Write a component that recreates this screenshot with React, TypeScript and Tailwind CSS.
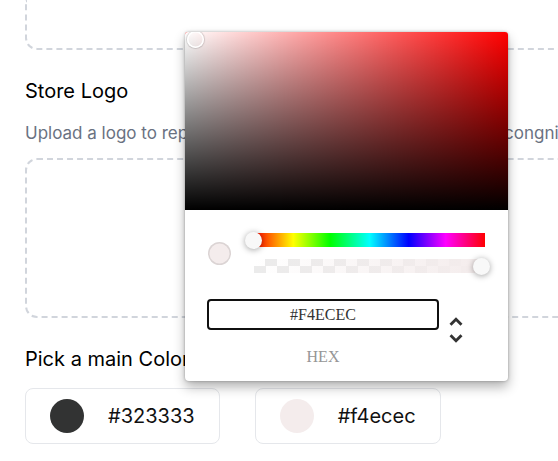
function ColorCard({ color, label }: { color: string; label: string }) {
  return (
    <div className="flex items-center gap-6 rounded-lg border border-[#e5e7eb] px-6 py-[10px]">
      <span className="h-[34px] w-[34px] rounded-full" style={{ backgroundColor: color }} />
      <span className="text-xl text-[#111]">{label}</span>
    </div>
  )
}

function ChromePicker() {
  return (
    <div className="absolute left-[185px] top-[32px] w-[323px] rounded-[4px] bg-white font-['Liberation_Serif',serif] shadow-[0_0_3px_rgba(0,0,0,0.3),0_6px_12px_rgba(0,0,0,0.3)]">
      {/* Saturation */}
      <div className="relative h-[178px] overflow-hidden rounded-t-[3px] bg-[#ff0000]">
        <div className="absolute inset-0 bg-[linear-gradient(to_right,#fff,rgba(255,255,255,0))]" />
        <div className="absolute inset-0 bg-[linear-gradient(to_top,#000,rgba(0,0,0,0))]" />
        <div className="absolute left-[2px] top-[-1px] h-[17px] w-[17px] rounded-full shadow-[inset_0_0_0_1.5px_#fff,0_0_1px_1px_rgba(0,0,0,0.15)]" />
      </div>

      <div className="px-[23px] pb-[16px] pt-[23px]">
        {/* Controls */}
        <div className="flex">
          <div className="w-[46px]">
            <div className="mt-[9px] h-[23px] w-[23px] rounded-full bg-[#f4ecec] shadow-[inset_0_0_0_1.5px_rgba(0,0,0,0.1)]" />
          </div>
          <div className="flex-1">
            <div className="relative h-[14px] bg-[linear-gradient(to_right,#f00_0%,#ff0_17%,#0f0_33%,#0ff_50%,#00f_67%,#f0f_83%,#f00_100%)]">
              <div className="absolute left-[-9px] top-[-1px] h-[17px] w-[17px] rounded-full bg-[#f8f8f8] shadow-[0_1px_6px_rgba(0,0,0,0.37)]" />
            </div>
            <div className="relative mt-[12px] h-[14px] bg-[conic-gradient(rgba(0,0,0,0.08)_25%,transparent_0_50%,rgba(0,0,0,0.08)_0_75%,transparent_0)] bg-[length:23px_14px]">
              <div className="absolute inset-0 bg-[linear-gradient(to_right,rgba(244,236,236,0),rgba(244,236,236,1))]" />
              <div className="absolute right-[-5px] top-[-1px] h-[17px] w-[17px] rounded-full bg-[#f8f8f8] shadow-[0_1px_6px_rgba(0,0,0,0.37)]" />
            </div>
          </div>
        </div>

        {/* Fields */}
        <div className="flex pt-[26px]">
          <div className="-ml-px flex-1">
            <div className="flex h-[31px] items-center justify-center rounded-[4px] border-2 border-[#101010] text-base text-[#333]">
              #F4ECEC
            </div>
            <div className="mt-[19px] text-center text-base leading-4 text-[#969696]">HEX</div>
          </div>
          <div className="w-[46px]">
            <svg viewBox="0 0 24 24" className="mt-[14px] h-[34px] w-[34px]">
              <path
                fill="#333"
                d="M12,18.17L8.83,15L7.42,16.41L12,21L16.59,16.41L15.17,15M12,5.83L15.17,9L16.58,7.59L12,3L7.41,7.59L8.83,9L12,5.83Z"
              />
            </svg>
          </div>
        </div>
      </div>
    </div>
  )
}

export default function App() {
  return (
    <div className="relative h-[461px] w-[558px] overflow-hidden bg-white font-['Inter',sans-serif] text-black">
      <div className="w-[640px] pl-[25px]">
        {/* Banner upload (scrolled past) */}
        <div className="h-[50px] rounded-b-xl border-2 border-t-0 border-dashed border-gray-300" />

        <h2 className="mt-[27px] text-xl">Store Logo</h2>
        <p className="mt-4 whitespace-nowrap text-[17px] leading-6 text-gray-500">
          Upload a logo to represent your brand, so customers can recongnize it.
        </p>
        <div className="mt-[13px] h-[160px] rounded-xl border-2 border-dashed border-gray-300" />

        <h2 className="mt-[27px] text-xl">Pick a main Color</h2>
        <div className="mt-[15px] flex gap-[35px]">
          <ColorCard color="#323333" label="#323333" />
          <ColorCard color="#f4ecec" label="#f4ecec" />
        </div>
      </div>

      <ChromePicker />
    </div>
  )
}
